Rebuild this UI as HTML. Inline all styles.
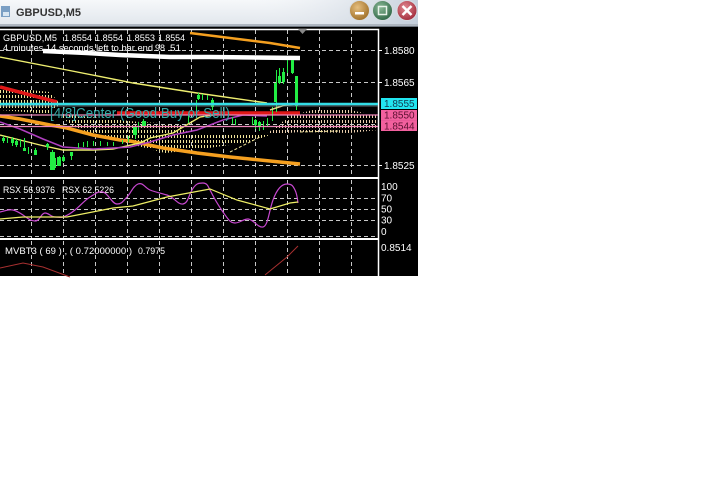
<!DOCTYPE html>
<html><head><meta charset="utf-8"><style>
html,body{margin:0;padding:0;background:#fff;width:703px;height:478px;overflow:hidden}
svg{display:block}
text{font-family:"Liberation Sans",sans-serif}
</style></head><body>
<svg width="703" height="478" viewBox="0 0 703 478" xmlns="http://www.w3.org/2000/svg">
<defs>
<linearGradient id="tb" x1="0" x2="0" y1="0" y2="1"><stop offset="0" stop-color="#f6f8fa"/><stop offset="1" stop-color="#e2e7ed"/></linearGradient>
<linearGradient id="tb2" x1="0" x2="1" y1="0" y2="0"><stop offset="0" stop-color="#eef1f5" stop-opacity="0"/><stop offset="1" stop-color="#bcc8d6" stop-opacity=".8"/></linearGradient>
<radialGradient id="b1" cx=".4" cy=".35" r=".7"><stop offset="0" stop-color="#e6bf80"/><stop offset="1" stop-color="#9c6c24"/></radialGradient>
<radialGradient id="b2" cx=".4" cy=".35" r=".7"><stop offset="0" stop-color="#8ab896"/><stop offset="1" stop-color="#2c6444"/></radialGradient>
<radialGradient id="b3" cx=".4" cy=".35" r=".7"><stop offset="0" stop-color="#e08890"/><stop offset="1" stop-color="#a02838"/></radialGradient>
<pattern id="pc" width="3" height="5" patternUnits="userSpaceOnUse"><rect width="1" height="3" fill="#f0e49a"/></pattern>
<pattern id="pd" width="3" height="5" patternUnits="userSpaceOnUse"><rect width="1" height="3" fill="#eccfae"/></pattern>
</defs>
<rect width="418" height="276" fill="#000"/>
<rect width="418" height="24" fill="url(#tb)"/>
<rect x="250" width="168" height="24" fill="url(#tb2)"/>
<rect y="24" width="418" height="2" fill="#aeb6c0"/>
<rect y="26" width="418" height="1" fill="#6e7680"/>
<rect x="1" y="6" width="9" height="11" fill="#7a9fc4"/>
<rect x="3" y="12" width="6" height="4" fill="#d8e6f2"/>
<text x="16" y="16" font-size="11" font-weight="bold" fill="#333" textLength="65" lengthAdjust="spacingAndGlyphs">GBPUSD,M5</text>
<circle cx="359.500" cy="10.500" r="10" fill="url(#b1)" stroke="#d8dde2"/>
<rect x="355" y="12" width="9" height="2.500" fill="#fff"/>
<circle cx="382.500" cy="10.500" r="10" fill="url(#b2)" stroke="#d8dde2"/>
<rect x="378.500" y="6.500" width="8" height="8" fill="none" stroke="#e8f2ea" stroke-width="1.500"/>
<circle cx="407" cy="10.500" r="10" fill="url(#b3)" stroke="#d8dde2"/>
<path d="M402.500 6 411.500 15M411.500 6 402.500 15" stroke="#fff" stroke-width="2.500"/>

<g stroke="#c8c8c8" stroke-width="1" stroke-dasharray="4 3" fill="none">
<path d="M31.500 30V177M63.500 30V177M95.500 30V177M127.500 30V177M159.500 30V177M191.500 30V177M223.500 30V177M255.500 30V177M287.500 30V177M319.500 30V177M351.500 30V177"/>
<path d="M31.500 180V238M63.500 180V238M95.500 180V238M127.500 180V238M159.500 180V238M191.500 180V238M223.500 180V238M255.500 180V238M287.500 180V238M319.500 180V238M351.500 180V238"/>
<path d="M31.500 241V276M63.500 241V276M95.500 241V276M127.500 241V276M159.500 241V276M191.500 241V276M223.500 241V276M255.500 241V276M287.500 241V276M319.500 241V276M351.500 241V276"/>
<path d="M0 50.500H378M0 82.500H378M0 124.500H378M0 165.500H378M0 198.500H378M0 209.500H378M0 220.500H378M0 236.500H378"/>
</g>
<g fill="none" stroke="#fff"><path d="M0 29.500H378.500V276" stroke-width="1.500"/><path d="M0 178H378M0 239H378" stroke-width="2"/></g>
<path d="M298 29h9l-4.500 5z" fill="#888"/>

<g fill="url(#pc)">
<path d="M0 87 50 92 60 104 50 114 0 110z"/>
<path d="M60 114 100 118 140 122 180 124 190 135 270 135 250 142 195 150 165 153 130 144 95 135 70 125z"/>
</g>
<path d="M265 135 290 116 320 108 350 110 378 116 378 130 350 133 300 132z" fill="url(#pd)"/>
<path d="M230 152 262 136 M300 132 340 131" stroke="#f0e49a" fill="none" stroke-dasharray="3 2"/>

<path d="M190 33 230 38 270 43 300 48" fill="none" stroke="#f5a020" stroke-width="2.500"/>
<path d="M0 116 20 119 50 125 67 128 93 135 120 140 130 141 163 148 197 153 230 157 270 161 300 164" fill="none" stroke="#f5a020" stroke-width="3.500"/>
<path d="M0 57 67 70 133 83 197 93 267 103" fill="none" stroke="#eeee70" stroke-width="1.400"/>
<path d="M0 135 20 140 40 145 63 150 93 150 113 149 140 143 150 138 173 133 200 117 225 113" fill="none" stroke="#eeee70" stroke-width="1.400"/>
<path d="M0 122 20 129 43 139 63 147 93 149 113 148 130 147 150 142 173 135 197 130 223 120 243 115 267 116" fill="none" stroke="#b040c0" stroke-width="1.500"/>
<path d="M0 87 57 102M117 113H300" fill="none" stroke="#e01818" stroke-width="3.500"/>
<path d="M43 51 87 53 120 55 170 57 210 57 300 58" fill="none" stroke="#fff" stroke-width="4.500"/>

<g stroke="#22ee44" stroke-width="1" fill="none" transform="translate(.5 0)">
<path d="M3 136V143M7 137V143M12 137V146M16 139V147M20 139V147M24 138V151M28 147V154M35 148V155M47 143V150M52 150V170M55 158V168M59 156V166M63 155V162M71 152V160M78 143V148M83 142V147M87 141V147M93 141V146M100 141V146M107 142V146M113 142V146M122 140V144M128 136V142M135 127V139M138 122V130M143 119V127M188 115V123M196 100V112M198 93V100M202 94V100M207 95V100M212 98V110M232 117V124M235 119V125M252 117V125M255 119V129M259 121V131M263 121V130M267 118V126M272 107V121M276 70V112M279 68V84M283 68V84M287 60V73M292 60V74M296 76V110"/>
</g>
<g fill="#22ee44">
<rect x="2" y="138" width="3" height="3"/><rect x="11" y="139" width="3" height="4"/><rect x="15" y="141" width="3" height="4"/><rect x="23" y="148" width="3" height="3"/><rect x="34" y="150" width="3" height="5"/><rect x="46" y="144" width="3" height="3"/><rect x="50" y="152" width="5" height="18"/><rect x="57" y="157" width="4" height="9"/><rect x="62" y="157" width="3" height="4"/><rect x="70" y="152" width="3" height="4"/><rect x="133" y="127" width="4" height="8"/><rect x="142" y="121" width="4" height="5"/><rect x="197" y="95" width="3" height="4"/><rect x="211" y="100" width="3" height="7"/><rect x="254" y="120" width="3" height="5"/><rect x="258" y="122" width="3" height="5"/><rect x="274" y="83" width="3" height="19"/><rect x="278" y="76" width="3" height="7"/><rect x="282" y="72" width="3" height="10"/><rect x="291" y="60" width="3" height="13"/><rect x="295" y="76" width="3" height="30"/>
</g>
<path d="M270 110 285 105 297 104" fill="none" stroke="#e8d48a" stroke-width="1.500"/>

<path d="M0 104H378" stroke="#33dde6" stroke-width="2.500"/>
<path d="M0 106H378" stroke="#7f8f98" stroke-width=".7"/>
<path d="M0 115H378M0 126.500H378" stroke="#ee88bb" stroke-width="1.200"/>

<text x="50" y="118" font-size="14.500" fill="#35aaa8" textLength="180" lengthAdjust="spacingAndGlyphs">[4/8]Center (Good Buy or Sell)</text>
<g font-size="9.500" fill="#fff">
<text x="3" y="41" textLength="54" lengthAdjust="spacingAndGlyphs">GBPUSD,M5</text>
<text x="64" y="41" textLength="28" lengthAdjust="spacingAndGlyphs">1.8554</text>
<text x="95" y="41" textLength="28" lengthAdjust="spacingAndGlyphs">1.8554</text>
<text x="127" y="41" textLength="28" lengthAdjust="spacingAndGlyphs">1.8553</text>
<text x="158" y="41" textLength="27" lengthAdjust="spacingAndGlyphs">1.8554</text>
<text x="3" y="51" textLength="150" lengthAdjust="spacingAndGlyphs">4 minutes 14 seconds left to bar end</text>
<text x="155" y="51" textLength="10" lengthAdjust="spacingAndGlyphs">98</text>
<text x="170" y="51" textLength="11" lengthAdjust="spacingAndGlyphs">51</text>
<text x="3" y="193" textLength="52" lengthAdjust="spacingAndGlyphs">RSX 56.9376</text>
<text x="62" y="193" textLength="52" lengthAdjust="spacingAndGlyphs">RSX 62.5226</text>
<text x="5" y="254" textLength="127" lengthAdjust="spacingAndGlyphs">MVBT3 ( 69 ) , ( 0.72000000 )</text>
<text x="138" y="254" textLength="27" lengthAdjust="spacingAndGlyphs">0.7975</text>
</g>

<path d="M0 212C5 211 9 209 13 210S20 213 23 215 30 221 35 221 41 213 45 213 51 217 55 217 60 218 63 217 70 214 75 210 85 200 90 197 98 191 103 192 112 204 117 204 123 201 127 197 133 186 138 184 145 188 150 190 160 193 167 195 178 205 183 204 188 197 192 190 199 183 203 183 208 186 210 190 218 205 223 212 230 223 235 223 243 219 248 219 258 228 263 227 269 211 273 200 282 184 287 184 293 186 295 190 298 203 298 203" fill="none" stroke="#c848d0" stroke-width="1.200"/>
<path d="M0 219 23 217 67 217 113 208 133 206 167 197 210 189 237 200 270 209 290 203 298 202" fill="none" stroke="#eeee66" stroke-width="1.200"/>
<path d="M0 268 23 263 43 267 70 277" fill="none" stroke="#a83030"/>
<path d="M265 275 287 257 298 246" fill="none" stroke="#a83030"/>

<g fill="#fff" stroke="#fff" stroke-width="1"><path d="M379 50.500H382M379 82.500H382M379 165.500H382"/></g>
<g font-size="10" fill="#fff">
<text x="384" y="54">1.8580</text><text x="384" y="86">1.8565</text><text x="384" y="169">1.8525</text>
<text x="381" y="190">100</text><text x="381" y="201.500">70</text><text x="381" y="212.500">50</text><text x="381" y="223.500">30</text><text x="381" y="235">0</text>
<text x="381" y="251">0.8514</text>
</g>
<rect x="381" y="98" width="36" height="11" fill="#22e6f0"/>
<rect x="381" y="110" width="36" height="21" fill="#f2609e"/>
<rect x="381" y="120" width="36" height="1" fill="#e85a98"/>
<g font-size="10"><text x="384" y="107" fill="#103a50">1.8555</text><text x="384" y="118.500" fill="#5a1030">1.8550</text><text x="384" y="129.500" fill="#5a1030">1.8544</text></g>
</svg>
</body></html>
